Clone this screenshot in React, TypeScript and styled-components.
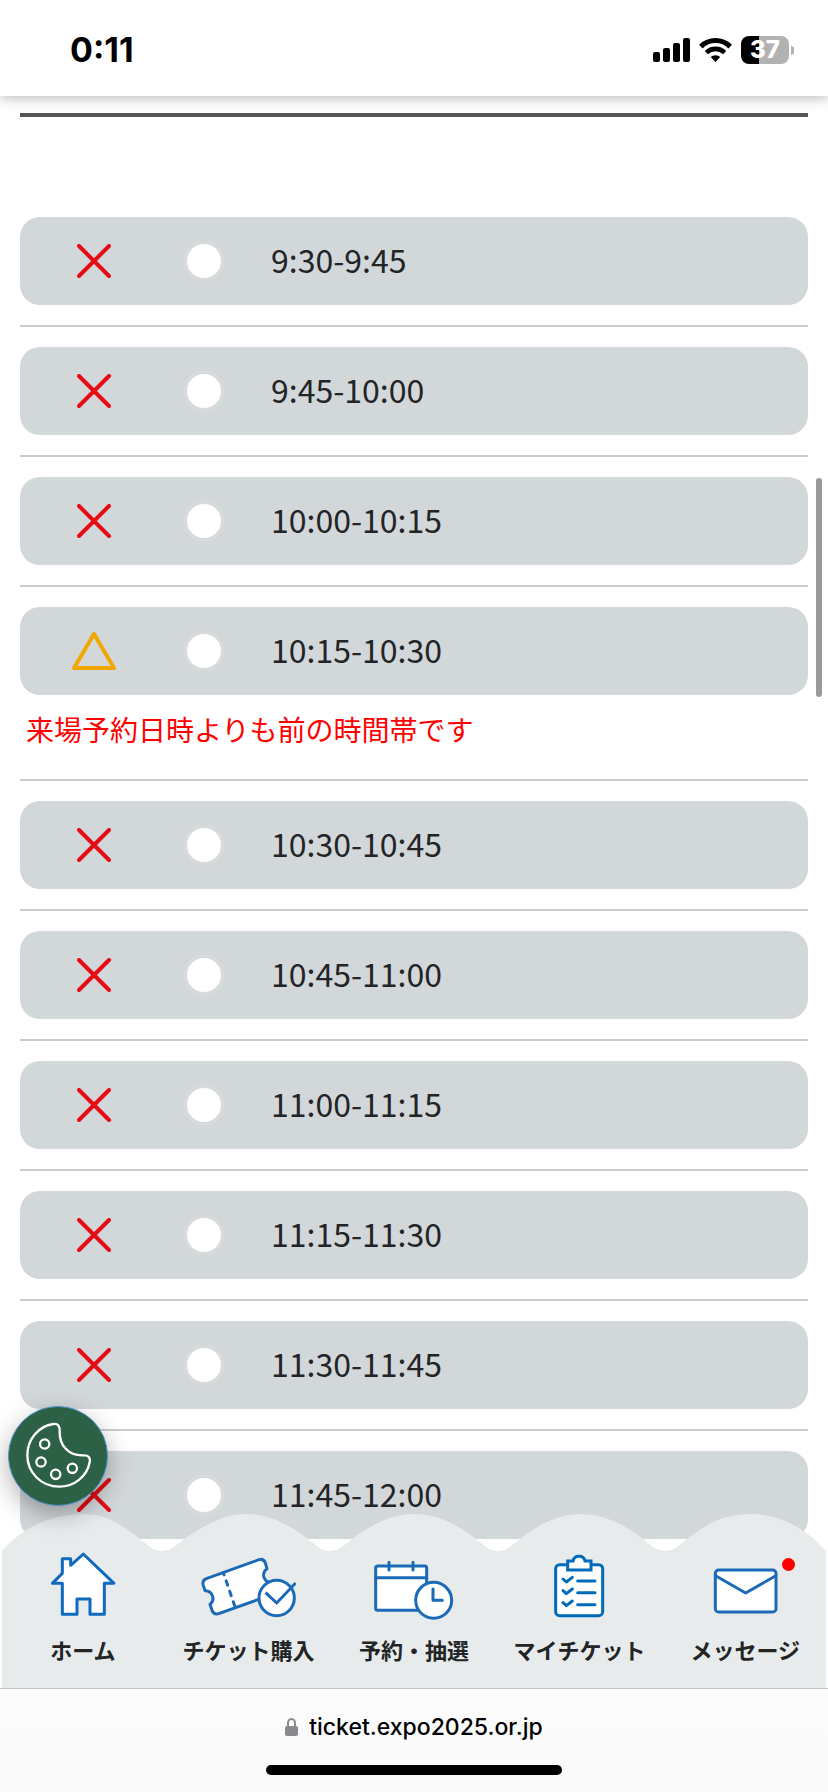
import React from "react";
import styled, { createGlobalStyle } from "styled-components";

const GlobalStyle = createGlobalStyle`
  *, *::before, *::after { box-sizing: border-box; }
  body {
    margin: 0;
    background: #fff;
    color: #222426;
    font-family: "Noto Sans CJK JP", "Noto Sans", sans-serif;
  }
`;

const StatusBar = styled.header`
  position: sticky;
  top: 0;
  z-index: 2;
  display: flex;
  align-items: center;
  justify-content: space-between;
  height: 96px;
  padding: 4px 34px 0 70px;
  background: #fff;
  box-shadow: 0 2px 12px rgba(0, 0, 0, 0.28);
  font-family: Inter, "Liberation Sans", sans-serif;
  font-weight: 700;
`;

const Clock = styled.time`
  font-size: 34px;
  line-height: 40px;
  color: #000;
`;

const StatusIcons = styled.div`
  display: flex;
  align-items: center;
  gap: 9px;
`;

const Battery = styled.div`
  position: relative;
  display: flex;
  align-items: center;
  justify-content: center;
  width: 48px;
  height: 28px;
  margin-right: 5px;
  border-radius: 8px;
  background: linear-gradient(90deg, #000 37%, #b2b2b2 37%);
  color: #fff;
  font-size: 24px;
  font-weight: 800;
  line-height: 28px;

  &::after {
    content: "";
    position: absolute;
    right: -5px;
    width: 3px;
    height: 9px;
    border-radius: 0 4px 4px 0;
    background: #b2b2b2;
  }
`;

const Main = styled.main`
  padding: 17px 20px 240px;
`;

const Rule = styled.hr`
  height: 4px;
  margin: 0 0 100px;
  border: 0;
  background: #555756;
`;

const SlotList = styled.ul`
  margin: 0;
  padding: 0;
  list-style: none;
`;

const SlotItem = styled.li`
  & + & {
    margin-top: 20px;
    padding-top: 20px;
    border-top: 2px solid #ccc;
  }
`;

const SlotLabel = styled.label`
  display: grid;
  grid-template-columns: 148px 72px 1fr;
  align-items: center;
  justify-items: center;
  height: 88px;
  border-radius: 20px;
  background: #d2d7da;
`;

const Radio = styled.input`
  appearance: none;
  width: 40px;
  height: 40px;
  margin: 0;
  border: 3px solid #d9dbdb;
  border-radius: 50%;
  background: #fff;
`;

const SlotTime = styled.span`
  justify-self: start;
  padding: 0 0 4px 31px;
  font-size: 32px;
  line-height: 48px;
`;

const SlotNote = styled.p`
  margin: 0;
  padding: 13px 6px 9px;
  color: #f00;
  font-size: 28px;
  line-height: 42px;
`;

const ScrollThumb = styled.div`
  position: fixed;
  top: 478px;
  right: 6px;
  width: 6px;
  height: 219px;
  border-radius: 3px;
  background: #999;
`;

const Dock = styled.div`
  position: fixed;
  right: 0;
  bottom: 0;
  left: 0;
`;

const Wave = styled.svg`
  display: block;
  width: 100%;
  height: 37px;
`;

const TabBar = styled.nav`
  display: grid;
  grid-template-columns: repeat(5, 1fr);
  height: 137px;
  background: #e7ebeb;
  box-shadow: inset 2px 0 #fff, inset -2px 0 #fff;
`;

const Tab = styled.a`
  position: relative;
  display: flex;
  flex-direction: column;
  align-items: center;
  gap: 10px;
  color: inherit;
  font-size: 22px;
  font-weight: 700;
  line-height: 32px;
  text-decoration: none;
  white-space: nowrap;
`;

const UnreadDot = styled.span`
  position: absolute;
  top: 7px;
  left: calc(50% + 37px);
  width: 13px;
  height: 13px;
  border-radius: 50%;
  background: #f00;
`;

const BrowserBar = styled.footer`
  display: flex;
  flex-direction: column;
  align-items: center;
  gap: 24px;
  height: 104px;
  padding-top: 24px;
  border-top: 1px solid #c3c6c6;
  background: linear-gradient(#fcfcfc, #f8f9f9);
`;

const Address = styled.a`
  display: flex;
  align-items: center;
  gap: 11px;
  color: #000;
  font-family: Inter, "Liberation Sans", sans-serif;
  font-size: 23px;
  font-weight: 500;
  line-height: 28px;
  text-decoration: none;
`;

const HomeIndicator = styled.div`
  width: 296px;
  height: 10px;
  border-radius: 5px;
  background: #000;
`;

const CookieButton = styled.button`
  position: fixed;
  bottom: 286px;
  left: 8px;
  display: grid;
  place-items: center;
  width: 100px;
  height: 100px;
  padding: 0;
  border: 1px solid #4c93d0;
  border-radius: 50%;
  background: #2d6146;
  box-shadow: 0 8px 24px rgba(0, 0, 0, 0.3);
`;

const TabSvg = styled.svg<{ $ink?: string }>`
  width: 96px;
  height: 72px;
  fill: #fff;
  stroke: ${({ $ink = "#1b6ab8" }) => $ink};
  stroke-width: 9;
  stroke-linecap: round;
  stroke-linejoin: round;
`;

const SignalIcon = () => (
  <svg width="37" height="24" viewBox="0 0 37 24" aria-hidden="true">
    <rect x="0" y="14" width="7" height="10" rx="2" />
    <rect x="10" y="10" width="7" height="14" rx="2" />
    <rect x="20" y="5" width="7" height="19" rx="2" />
    <rect x="30" y="0" width="7" height="24" rx="2" />
  </svg>
);

const WifiIcon = () => (
  <svg width="33" height="24" viewBox="0 0 33 24" fill="none" stroke="#000" aria-hidden="true">
    <path d="M1.8 8.6a21 21 0 0 1 29.4 0" strokeWidth="5" />
    <path d="M7.4 14.6a13 13 0 0 1 18.2 0" strokeWidth="4.6" />
    <path d="M16.5 24l-4.8-4.9a7 7 0 0 1 9.6 0z" fill="#000" stroke="none" />
  </svg>
);

const FullIcon = () => (
  <svg width="34" height="34" viewBox="0 0 34 34" role="img" aria-label="満員">
    <path d="M2 2l30 30M32 2L2 32" stroke="#e60c14" strokeWidth="4" strokeLinecap="round" />
  </svg>
);

const FewLeftIcon = () => (
  <svg width="44" height="38" viewBox="0 0 44 38" role="img" aria-label="残りわずか">
    <path d="M22 2L42 36H2z" fill="none" stroke="#f2a700" strokeWidth="4" strokeLinejoin="round" />
  </svg>
);

const HomeIcon = () => (
  <TabSvg $ink="#0e69bf" viewBox="105 153 288 216" aria-hidden="true">
    <path d="M250 162L342 250H313V343H270V297H231V343H187V250H157L187 220V176H212V196Z" />
  </TabSvg>
);

const TicketIcon = () => (
  <TabSvg viewBox="601 153 288 216" aria-hidden="true">
    <path d="M620 236L778 179Q792 175 797 189L802 206A23 23 0 0 0 817 248L830 279L657 341Q643 345 637 331L631 313A23 23 0 0 0 616 272L610 253Q608 241 620 236Z" />
    <path d="M671 218L706 320" strokeDasharray="14 19" strokeDashoffset="7" />
    <circle cx="831" cy="294" r="53" />
    <path d="M801 281L831 309L885 252" fill="none" strokeLinecap="square" strokeLinejoin="miter" />
  </TabSvg>
);

const CalendarIcon = () => (
  <TabSvg viewBox="1098 153 288 216" aria-hidden="true">
    <rect x="1127" y="198" width="153" height="133" rx="6" />
    <path d="M1127 233H1280M1167 187V210M1239 187V210" />
    <circle cx="1301" cy="301" r="54" />
    <path d="M1299 267V301H1327" fill="none" />
  </TabSvg>
);

const ClipboardIcon = () => (
  <TabSvg $ink="#006bb9" viewBox="371 153 288 216" aria-hidden="true">
    <rect x="442" y="194" width="141" height="153" rx="12" />
    <path d="M478 210V183H494Q497 169 512 169Q527 169 530 183H548V210Z" strokeLinejoin="miter" />
    {[0, 35, 71].map((dy) => (
      <path key={dy} d={`M464 ${237 + dy}L474 ${246 + dy}L492 ${232 + dy}M508 ${243 + dy}H560`} fill="none" />
    ))}
  </TabSvg>
);

const MailIcon = () => (
  <TabSvg viewBox="868 153 288 216" aria-hidden="true">
    <rect x="923" y="210" width="182" height="126" rx="10" />
    <path d="M925 228L1014 279L1103 228" fill="none" />
  </TabSvg>
);

const LockIcon = () => (
  <svg width="13" height="18" viewBox="0 0 13 18" aria-hidden="true">
    <rect y="8" width="13" height="10" rx="2" fill="#8a8a8e" />
    <path d="M3 9V5a3.5 4 0 0 1 7 0v4" fill="none" stroke="#8a8a8e" strokeWidth="2" />
  </svg>
);

const CookieIcon = () => (
  <svg width="68" height="68" viewBox="72 126 204 204" fill="none" stroke="#fff" strokeWidth="7" aria-hidden="true">
    <path d="M160 132C175 130 180 140 179 155C178 195 205 228 250 226C267 225 272 235 269 247C261 290 222 320 178 320C124 320 82 278 82 226C82 178 115 138 160 132Z" />
    <circle cx="134" cy="192" r="14" />
    <circle cx="123" cy="246" r="14" />
    <circle cx="167" cy="283" r="14" />
    <circle cx="217" cy="265" r="14" />
  </svg>
);

type Slot = { time: string; fewLeft?: boolean; note?: string };

const slots: Slot[] = [
  { time: "9:30-9:45" },
  { time: "9:45-10:00" },
  { time: "10:00-10:15" },
  { time: "10:15-10:30", fewLeft: true, note: "来場予約日時よりも前の時間帯です" },
  { time: "10:30-10:45" },
  { time: "10:45-11:00" },
  { time: "11:00-11:15" },
  { time: "11:15-11:30" },
  { time: "11:30-11:45" },
  { time: "11:45-12:00" },
];

const tabs = [
  { label: "ホーム", Icon: HomeIcon },
  { label: "チケット購入", Icon: TicketIcon },
  { label: "予約・抽選", Icon: CalendarIcon },
  { label: "マイチケット", Icon: ClipboardIcon },
  { label: "メッセージ", Icon: MailIcon, unread: true },
];

const waveTrough = (x: number) =>
  `C${x - 15} 31 ${x - 10} 38 ${x} 38S${x + 15} 31 ${x + 23} 25`;
const wavePath =
  "M2 38C22 14 52 0 83 0C105 0 121 10 139 25" +
  waveTrough(162) +
  "C207 10 225 0 246 0S289 10 307 25" +
  waveTrough(330) +
  "C373 10 392 0 414 0S457 10 475 25" +
  waveTrough(498) +
  "C539 10 560 0 581 0S624 10 642 25" +
  waveTrough(665) +
  "C707 10 724 0 750 0C780 0 806 15 826 38Z";

export default function App() {
  return (
    <>
      <GlobalStyle />
      <StatusBar>
        <Clock>0:11</Clock>
        <StatusIcons>
          <SignalIcon />
          <WifiIcon />
          <Battery>37</Battery>
        </StatusIcons>
      </StatusBar>

      <Main>
        <Rule />
        <SlotList>
          {slots.map(({ time, fewLeft, note }) => (
            <SlotItem key={time}>
              <SlotLabel>
                {fewLeft ? <FewLeftIcon /> : <FullIcon />}
                <Radio type="radio" name="slot" value={time} disabled />
                <SlotTime>{time}</SlotTime>
              </SlotLabel>
              {note && <SlotNote>{note}</SlotNote>}
            </SlotItem>
          ))}
        </SlotList>
      </Main>

      <ScrollThumb />

      <Dock>
        <Wave viewBox="0 0 828 38" preserveAspectRatio="none" aria-hidden="true">
          <path d={wavePath} fill="#e7ebeb" />
        </Wave>
        <TabBar>
          {tabs.map(({ label, Icon, unread }) => (
            <Tab key={label} href="#">
              <Icon />
              {label}
              {unread && <UnreadDot />}
            </Tab>
          ))}
        </TabBar>
        <BrowserBar>
          <Address href="#">
            <LockIcon />
            ticket.expo2025.or.jp
          </Address>
          <HomeIndicator />
        </BrowserBar>
      </Dock>

      <CookieButton type="button" aria-label="Cookie">
        <CookieIcon />
      </CookieButton>
    </>
  );
}
